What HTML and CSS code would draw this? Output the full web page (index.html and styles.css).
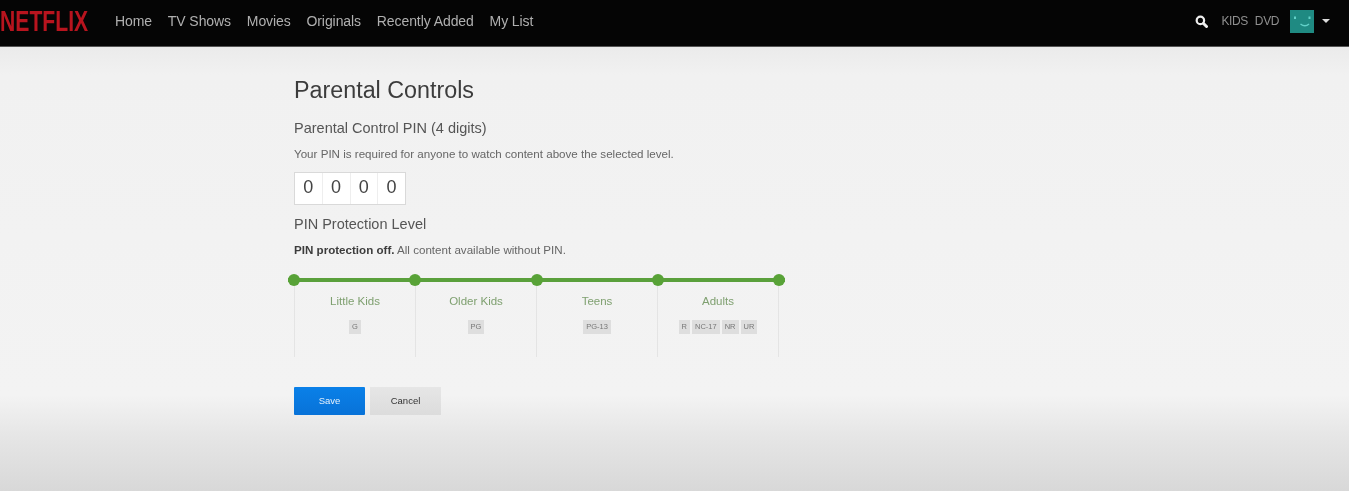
FILE: index.html
```html
<!DOCTYPE html>
<html lang="en">
<head>
    <meta charset="UTF-8">
    <meta name="viewport" content="width=device-width, initial-scale=1.0">
    <title>Parental Controls</title>
    <link rel="stylesheet" href="styles.css">
</head>
<body>
    <header class="topbar">
        <div class="logo-box"><span class="logo">NETFLIX</span></div>
        <nav class="nav">
            <a>Home</a>
            <a>TV Shows</a>
            <a>Movies</a>
            <a>Originals</a>
            <a>Recently Added</a>
            <a>My List</a>
        </nav>
        <div class="account">
            <svg class="search" viewBox="0 0 14 14" width="13" height="13">
                <circle cx="5.8" cy="5.8" r="4" fill="none" stroke="#eee" stroke-width="2.4"/>
                <path d="M9.2 9.2 L12.4 12.4" stroke="#eee" stroke-width="3.2" stroke-linecap="round"/>
            </svg>
            <span class="kids">KIDS</span>
            <span class="dvd">DVD</span>
            <svg class="avatar" viewBox="0 0 24 23" width="24" height="23">
                <rect width="24" height="23" fill="#1f8a82"/>
                <rect x="4" y="6.5" width="2" height="2.5" fill="#62d0c8"/>
                <rect x="18.5" y="6.5" width="2" height="2.5" fill="#62d0c8"/>
                <path d="M10.5 14 Q15 17.5 19 14" fill="none" stroke="#62d0c8" stroke-width="1.5"/>
            </svg>
            <span class="caret"></span>
        </div>
    </header>

    <main class="content">
        <h1>Parental Controls</h1>
        <h2>Parental Control PIN (4 digits)</h2>
        <p class="note">Your PIN is required for anyone to watch content above the selected level.</p>
        <div class="pin">
            <span>0</span>
            <span>0</span>
            <span>0</span>
            <span>0</span>
        </div>
        <h2 class="level-title">PIN Protection Level</h2>
        <p class="note"><b>PIN protection off.</b> All content available without PIN.</p>

        <div class="levels">
            <div class="track">
                <i></i><i></i><i></i><i></i><i></i>
            </div>
            <div class="columns">
                <div class="col">
                    <div class="col-name">Little Kids</div>
                    <div class="ratings"><span>G</span></div>
                </div>
                <div class="col">
                    <div class="col-name">Older Kids</div>
                    <div class="ratings"><span>PG</span></div>
                </div>
                <div class="col">
                    <div class="col-name">Teens</div>
                    <div class="ratings"><span>PG-13</span></div>
                </div>
                <div class="col">
                    <div class="col-name">Adults</div>
                    <div class="ratings"><span>R</span><span>NC-17</span><span>NR</span><span>UR</span></div>
                </div>
            </div>
        </div>

        <div class="buttons">
            <button class="btn save">Save</button>
            <button class="btn cancel">Cancel</button>
        </div>
    </main>
</body>
</html>
```

FILE: styles.css
```css
* {
    box-sizing: border-box;
}
html, body {
    height: 100%;
}
body {
    margin: 0;
    overflow: hidden;
    font-family: "Liberation Sans", Arial, sans-serif;
    color: #333;
    background: linear-gradient(to bottom, #ebebeb 47px, #f1f1f1 75px, #f3f3f3 395px, #e6e6e6 435px, #d8d8d8 491px);
}

.topbar {
    height: 47px;
    padding-bottom: 4px;
    background: #050505;
    border-bottom: 1px solid #555;
    display: flex;
    align-items: center;
    filter: blur(0.7px);
}
.logo-box {
    width: 115px;
    flex-shrink: 0;
}
.logo {
    display: inline-block;
    font-weight: bold;
    font-size: 30px;
    line-height: 30px;
    color: #b8141e;
    transform: scaleX(0.705);
    transform-origin: left center;
}
.nav {
    display: flex;
    gap: 15.8px;
    font-size: 14px;
    letter-spacing: -0.08px;
    color: #b0b0b0;
}
.account {
    margin-left: auto;
    display: flex;
    align-items: center;
    font-size: 12px;
    color: #8f8f8f;
    padding-right: 19px;
}
.search {
    margin-right: 13px;
}
.kids {
    margin-right: 7px;
    letter-spacing: -0.4px;
}
.dvd {
    margin-right: 11px;
    letter-spacing: -0.4px;
}
.caret {
    margin-left: 8px;
    border-left: 4px solid transparent;
    border-right: 4px solid transparent;
    border-top: 4px solid #ddd;
}

.content {
    width: 490px;
    margin-left: 294px;
    filter: blur(0.7px);
}
h1 {
    margin: 29px 0 0;
    font-size: 23.3px;
    line-height: 28px;
    font-weight: normal;
    color: #3c3c3c;
}
h2 {
    margin: 15px 0 0;
    font-size: 14.5px;
    line-height: 18px;
    font-weight: normal;
    color: #555;
}
.note {
    margin: 10px 0 0;
    font-size: 11.6px;
    line-height: 14px;
    color: #666;
}
.note b {
    color: #3c3c3c;
}
.pin {
    display: flex;
    width: 112px;
    height: 33px;
    margin-top: 11px;
    background: #fff;
    border: 1px solid #d9d9d9;
}
.pin span {
    flex: 1;
    text-align: center;
    font-size: 18px;
    line-height: 29px;
    color: #444;
    border-left: 1px solid #eee;
}
.pin span:first-child {
    border-left: none;
}
h2.level-title {
    margin-top: 10px;
}

.levels {
    width: 485px;
    margin-top: 17px;
}
.track {
    display: flex;
    justify-content: space-between;
    align-items: center;
    height: 12px;
    margin: 0 -6px;
    background: linear-gradient(#5aa03c, #5aa03c) center / 100% 4px no-repeat;
}
.track i {
    width: 12px;
    height: 12px;
    border-radius: 50%;
    background: #58a237;
}
.columns {
    display: flex;
    height: 71px;
}
.col {
    flex: 1;
    text-align: center;
    border-left: 1px solid #e4e4e4;
    padding-top: 8px;
}
.col:last-child {
    border-right: 1px solid #e4e4e4;
}
.col-name {
    font-size: 11.5px;
    line-height: 14px;
    color: #7fa070;
}
.ratings {
    display: flex;
    justify-content: center;
    gap: 2px;
    margin-top: 12px;
}
.ratings span {
    padding: 0 3px;
    font-size: 7.5px;
    line-height: 14px;
    color: #777;
    background: #dedede;
}

.buttons {
    display: flex;
    gap: 5px;
    margin-top: 30px;
}
.btn {
    width: 71px;
    height: 28px;
    border: none;
    padding: 0 0 2px;
    font-family: inherit;
    font-size: 9.5px;
}
.save {
    color: #e6f1fc;
    background: linear-gradient(to bottom, #0a80e8, #0872d8);
    border-radius: 1px;
}
.cancel {
    color: #333;
    background: linear-gradient(to bottom, #e6e6e6, #dcdcdc);
}
```
